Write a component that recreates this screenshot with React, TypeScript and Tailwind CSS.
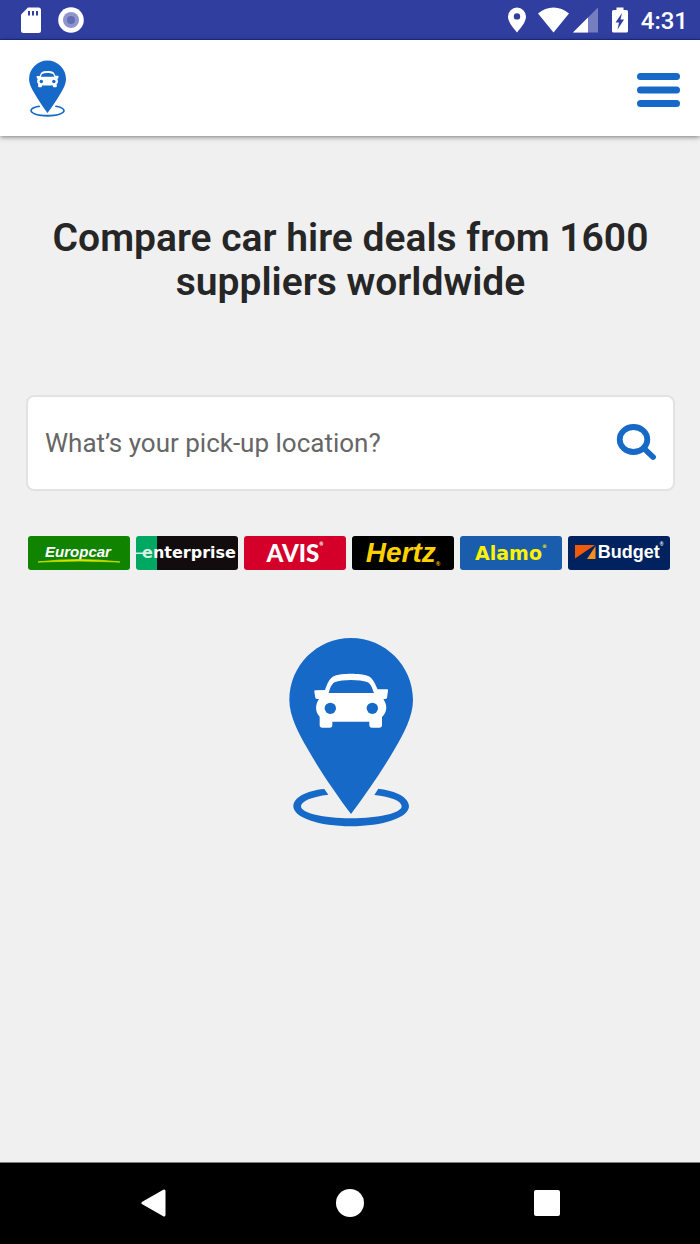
import { FC, ReactNode, useState } from "react"
import clsx from "clsx"

const Ring = {
	bold: "M163 507C108 512 70 533 70 559C70 593 148 619 243 619S417 593 417 559C417 533 380 512 325 506L313 525C362 530 395 543 395 559C395 579 327 595 243 595S93 579 93 559C93 543 126 530 175 524Z",
	thin: "M163 507C108 512 70 533 70 559C70 593 148 619 243 619S417 593 417 559C417 533 380 512 325 506L318 522C368 527 400 542 400 559C400 582 329 601 243 601S87 582 87 559C87 542 120 527 170 522Z",
}

const CarPin: FC<{ className: string; ring: "bold" | "thin" }> = ({ className, ring }) => (
	<svg className={className} viewBox="57 52 372 568" aria-hidden="true">
		<path
			fill="#1669c7"
			d="M243 54C141 54 58 137 58 240C58 290 88 343 110 382C150 453 200 525 243 582C290 519 336 453 377 382C400 343 429 290 429 240C429 137 345 54 243 54Z"
		/>
		<path fill="#1669c7" d={Ring[ring]} />
		<path
			fill="#fff"
			fillRule="evenodd"
			d="M165 210C172 190 179 172 195 167C214 159 272 159 292 167C308 172 315 190 323 208H351Q355 208 354 212L351 233Q350 237 346 237H340C352 254 353 276 336 291V315Q336 323 328 323H306Q298 323 298 315V305H187V315Q187 323 179 323H157Q149 323 149 315V290C135 276 135 254 147 237H141Q137 237 136 233L133 215Q132 211 136 211ZM176 219H312C307 207 304 193 293 187C268 178 218 178 194 187C183 193 180 207 176 219Z"
		/>
		<circle cx="181" cy="265" r="17" fill="#1669c7" />
		<circle cx="307" cy="265" r="17" fill="#1669c7" />
	</svg>
)

const StatusBar: FC = () => (
	<div className="flex h-10 items-center justify-between border-b border-[#1c2f94] bg-[#303f9f] pr-3 pl-5 text-white">
		<div className="flex items-center gap-4">
			<svg className="h-[26px] w-[22px]" viewBox="0 0 22 26" aria-hidden="true">
				<path fill="#fff" d="M8 0.500H18.500Q21 0.500 21 3V23.500Q21 26 18.500 26H3.500Q1 26 1 23.500V7.500Z" />
				<path fill="#303f9f" d="M8 4h2v4.500h-2zM12 4h2v4.500h-2zM16 4h2v4.500h-2z" />
			</svg>
			<svg className="size-[26px]" viewBox="0 0 26 26" aria-hidden="true">
				<circle cx="13" cy="13" r="12.800" fill="#fff" />
				<circle cx="13" cy="13" r="8" fill="#8d95cb" />
				<circle cx="13" cy="13" r="4" fill="#626db6" />
			</svg>
		</div>
		<div className="flex items-center">
			<svg className="mr-3 h-[26px] w-[18px]" viewBox="0 0 18 26" aria-hidden="true">
				<path
					fill="#fff"
					fillRule="evenodd"
					d="M9 0.500A9 9 0 0 0 0 9.500C0 15 5 20.500 9 25.500C13 20.500 18 15 18 9.500A9 9 0 0 0 9 0.500ZM9 6.200A3.200 3.200 0 1 1 9 12.600A3.200 3.200 0 1 1 9 6.200Z"
				/>
			</svg>
			<svg className="mr-1 h-[26px] w-[31px]" viewBox="0 0 31 26" aria-hidden="true">
				<path fill="#fff" d="M0 6.500C9 -1.500 22 -1.500 31 6.500L15.500 25.500Z" />
			</svg>
			<svg className="mr-3 h-[26px] w-[26px]" viewBox="0 0 26 26" aria-hidden="true">
				<path fill="#757fc0" d="M25 0.500V25.500H0Z" />
				<path fill="#fff" d="M15 10.500V25.500H0Z" />
			</svg>
			<svg className="mr-3 h-[26px] w-[18px]" viewBox="0 0 18 26" aria-hidden="true">
				<path fill="#fff" d="M5.500 0.500H12.500V3H15.500Q17 3 17 4.500V24Q17 25.500 15.500 25.500H2.500Q1 25.500 1 24V4.500Q1 3 2.500 3H5.500Z" />
				<path fill="#303f9f" d="M11 6L4.500 15.500H8L6.500 22.500L13 12.500H9.500Z" />
			</svg>
			<time className="pt-0.5 text-2xl leading-none font-medium">4:31</time>
		</div>
	</div>
)

const Header: FC = () => (
	<header className="z-10 flex h-24 items-center justify-between bg-white pr-5 pl-[29px] shadow-[0_1px_5px_rgba(0,0,0,0.5)]">
		<a href="#" aria-label="Home">
			<CarPin className="h-[57px] w-[37px]" ring="thin" />
		</a>
		<button type="button" aria-label="Menu" className="pt-1">
			<svg className="h-[34px] w-[43px]" viewBox="0 0 43 34" fill="#1669c7" aria-hidden="true">
				<rect width="43" height="7" rx="3.500" />
				<rect y="13.500" width="43" height="7" rx="3.500" />
				<rect y="27" width="43" height="7" rx="3.500" />
			</svg>
		</button>
	</header>
)

const SearchBox: FC = () => {
	const [location, setLocation] = useState<string>("")

	return (
		<form
			className="flex h-24 items-center rounded-lg border-2 border-[#e2e2e2] bg-white px-[17px]"
			onSubmit={e => e.preventDefault()}
		>
			<input
				type="text"
				aria-label="Pick-up location"
				className="min-w-0 flex-1 text-[26px] text-[#262626] outline-none placeholder:text-[#666666]"
				placeholder="What’s your pick-up location?"
				value={location}
				onChange={e => setLocation(e.target.value)}
			/>
			<button type="submit" aria-label="Search">
				<svg className="h-[38px] w-10" viewBox="0 0 40 38" fill="none" stroke="#1669c7" aria-hidden="true">
					<ellipse cx="17.500" cy="15.500" rx="13.800" ry="12.500" strokeWidth="5.800" />
					<path d="M27.500 24L37 33" strokeWidth="5.800" strokeLinecap="round" />
				</svg>
			</button>
		</form>
	)
}

const Supplier: FC<{ className: string; children: ReactNode }> = ({ className, children }) => (
	<li className={clsx("relative flex h-[34px] items-center justify-center overflow-hidden rounded-[3px] leading-none whitespace-nowrap", className)}>
		{children}
	</li>
)

const Suppliers: FC = () => (
	<ul className="grid grid-cols-6 gap-1.5 pr-[5px] pl-0.5">
		<Supplier className="bg-[#108400] pr-0.5 pb-1 font-['Liberation_Sans',sans-serif] text-[15px] font-bold text-white italic">
			Europcar
			<svg className="absolute bottom-[7px] left-[10px] h-[4px] w-[82px]" viewBox="0 0 82 4" aria-hidden="true">
				<path fill="#d8e800" d="M0 3Q41 -2 82 3Q41 1 0 3Z" stroke="#d0e000" strokeWidth="0.800" />
			</svg>
		</Supplier>
		<Supplier className="bg-[linear-gradient(to_right,#00a862_21px,#120c0e_21px)] pl-1 font-['DejaVu_Sans',sans-serif] text-base font-bold text-white">
			<svg className="absolute top-[16px] left-0 h-[3px] w-4" viewBox="0 0 16 3" aria-hidden="true">
				<path fill="#d5f0e4" d="M0 0.500h16v1.500H0z" />
			</svg>
			<span className="text-[#d5f0e4]">e</span>nterprise
		</Supplier>
		<Supplier className="bg-[#d4002a] font-['Lato',sans-serif] text-2xl font-black text-white">
			AVIS<sup className="top-0 mt-2 self-start text-[5px]">®</sup>
		</Supplier>
		<Supplier className="bg-black font-['Liberation_Sans',sans-serif] text-[28px] font-bold text-[#ffd100] italic">
			Hertz<sub className="bottom-0 mb-1.5 self-end text-[6px]">®</sub>
		</Supplier>
		<Supplier className="bg-[#1a5dad] font-['DejaVu_Sans',sans-serif] text-[19px] font-bold text-[#fff200]">
			Alamo<sup className="top-0 mt-2.5 self-start text-[5px]">®</sup>
		</Supplier>
		<Supplier className="bg-[#00235f] pb-0.5 font-['Liberation_Sans',sans-serif] text-[18px] font-bold text-white">
			<svg className="mr-0.5 h-[14px] w-[21px]" viewBox="0 0 21 14" aria-hidden="true">
				<path fill="#f15a0a" d="M0 0H20L0 13.500Z" />
				<path fill="#f78f1e" d="M20.500 1V14H12Z" />
			</svg>
			Budget<sup className="top-0 mt-2 self-start text-[5px]">®</sup>
		</Supplier>
	</ul>
)

const NavBar: FC = () => (
	<nav className="grid h-[82px] grid-cols-3 items-center justify-items-center border-t border-[#808080] bg-black px-[54px] pb-px">
		<button type="button" aria-label="Back">
			<svg className="size-7" viewBox="0 0 28 28" aria-hidden="true">
				<path fill="#fff" stroke="#fff" strokeWidth="3" strokeLinejoin="round" d="M25 2V26L4 14Z" />
			</svg>
		</button>
		<button type="button" aria-label="Home" className="size-7 rounded-full bg-white" />
		<button type="button" aria-label="Recent apps" className="size-[26px] rounded-xs bg-white" />
	</nav>
)

const App: FC = () => (
	<div className="flex min-h-screen flex-col bg-[#f0f0f0] font-['Roboto',sans-serif]">
		<StatusBar />
		<Header />
		<main className="flex flex-1 flex-col pt-20 pr-[25px] pl-[26px]">
			<h1 className="text-center text-[39px] leading-[44px] font-semibold text-[#262626]">
				Compare car hire deals from 1600 suppliers worldwide
			</h1>
			<div className="mt-[91px]">
				<SearchBox />
			</div>
			<div className="mt-[45px]">
				<Suppliers />
			</div>
			<CarPin className="mt-[67px] h-[190px] w-[124px] self-center" ring="bold" />
		</main>
		<NavBar />
	</div>
)

export default App
